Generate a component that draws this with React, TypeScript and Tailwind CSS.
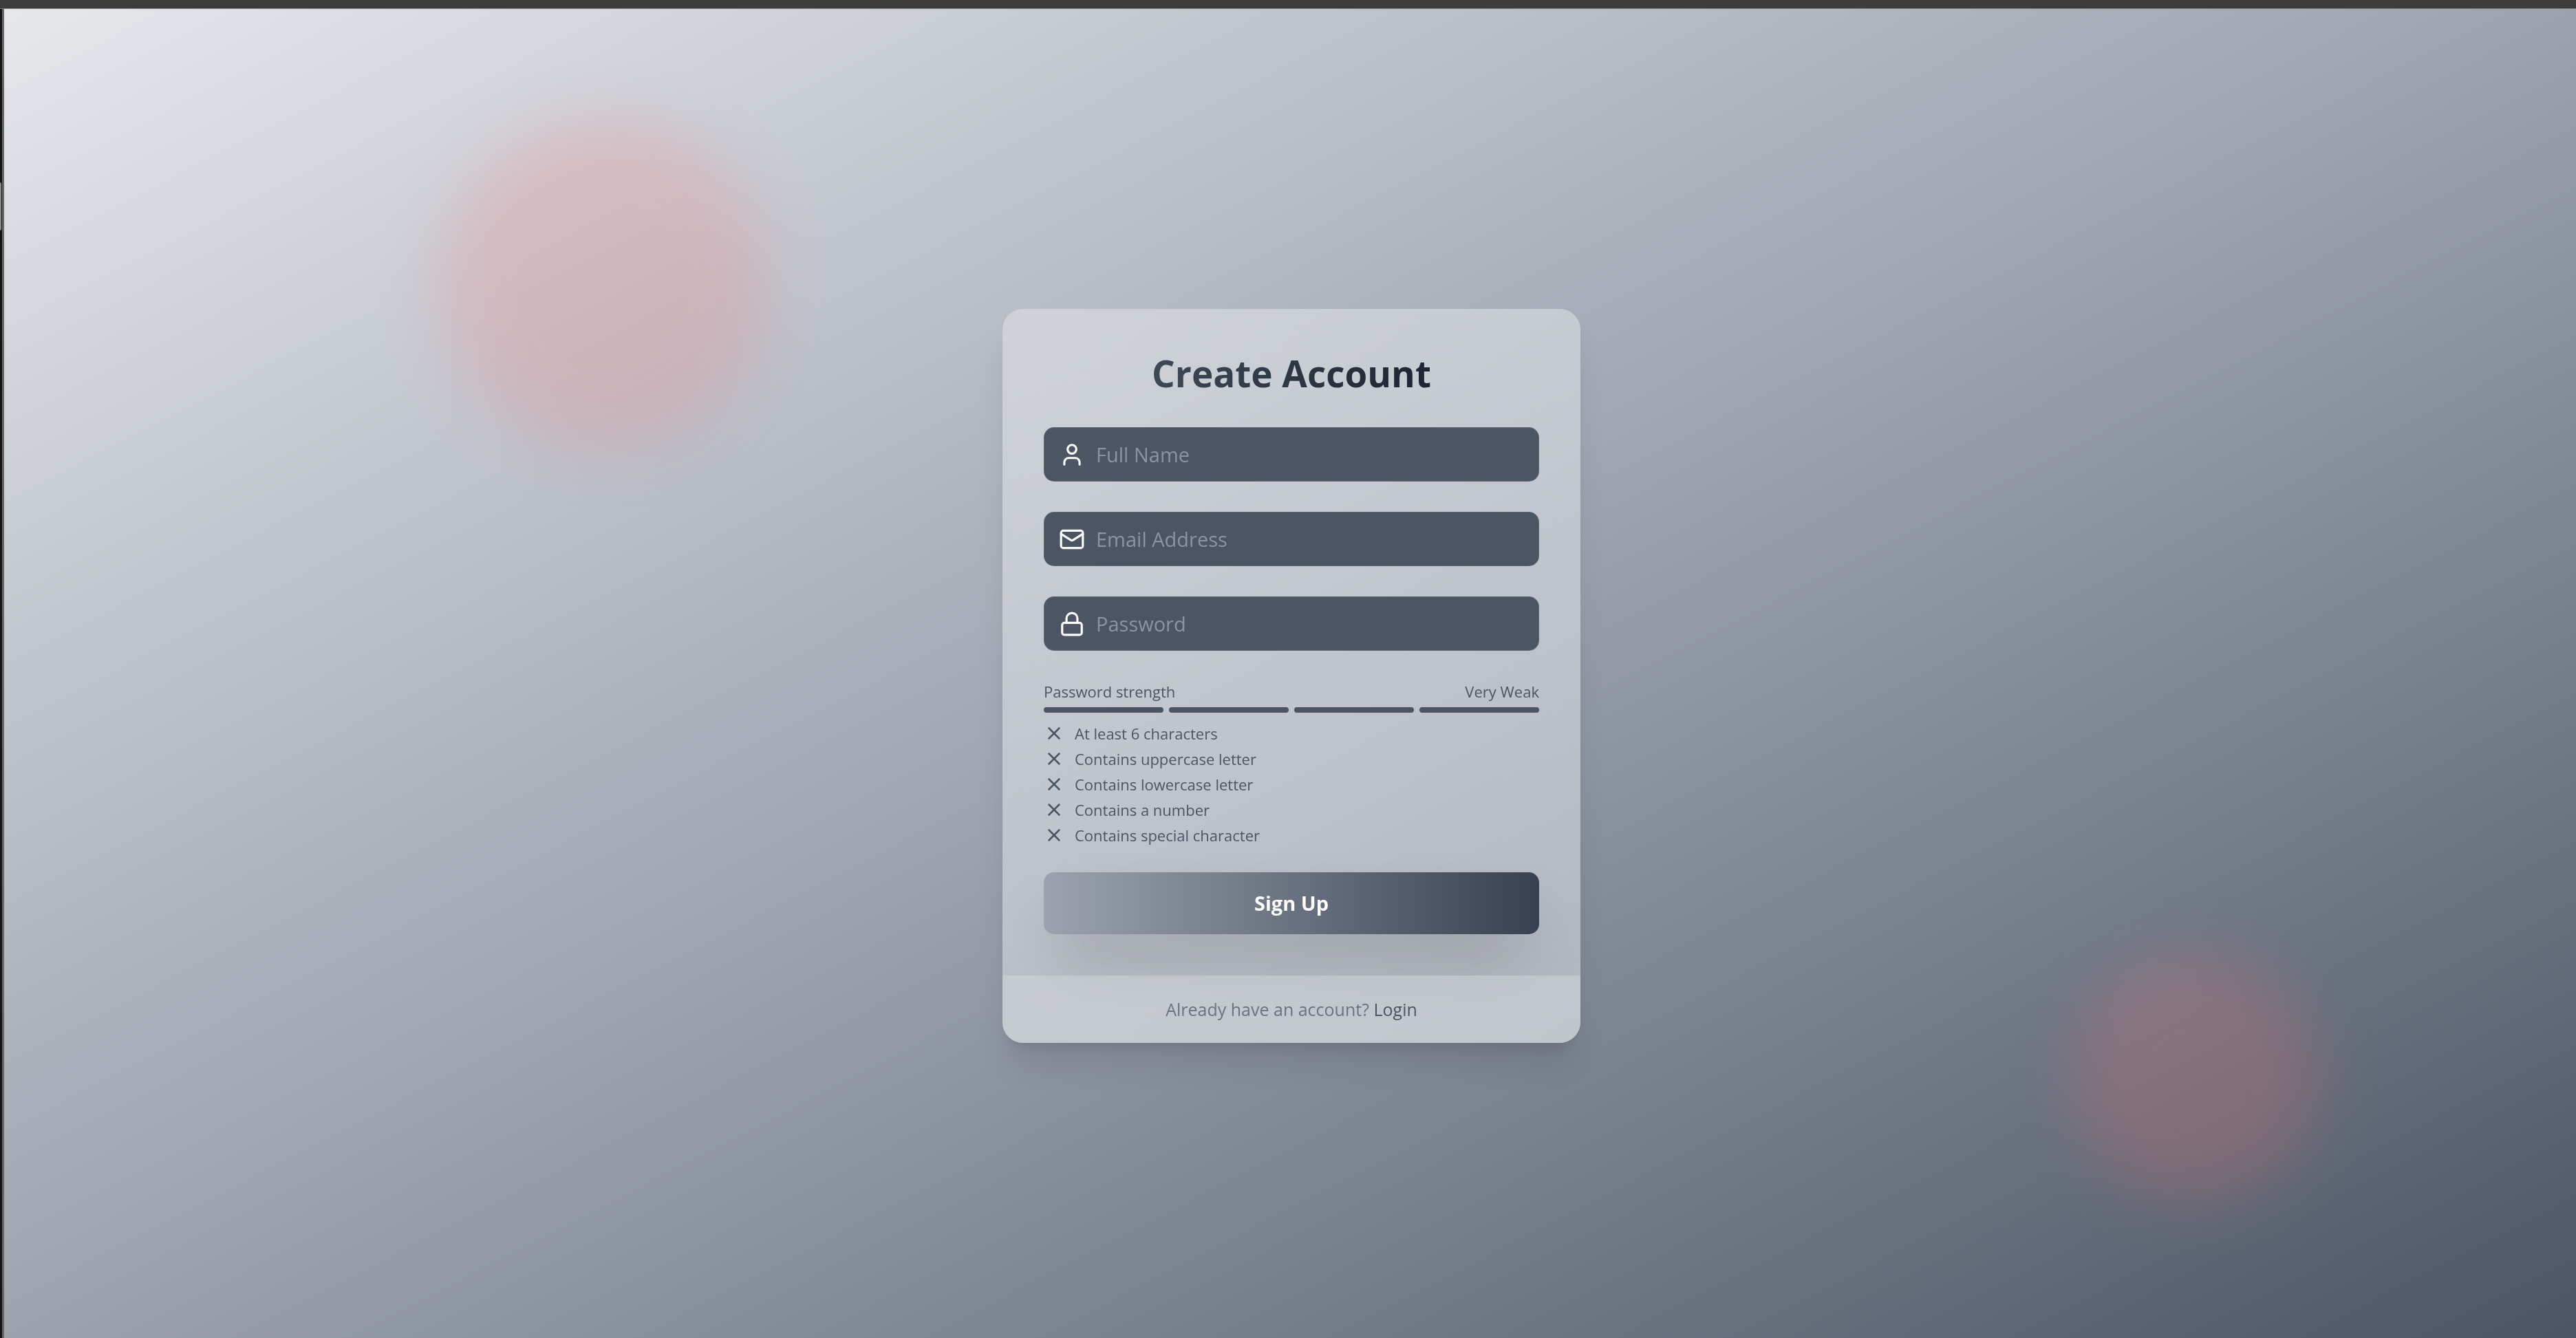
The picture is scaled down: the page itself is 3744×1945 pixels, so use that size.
import { useState } from "react";
import { Lock, Mail, User, X, type LucideIcon } from "lucide-react";

function FloatingShape({ className }: { className: string }) {
  return (
    <div
      aria-hidden="true"
      className={`absolute rounded-full bg-[#f87171] opacity-20 blur-[45px] ${className}`}
    />
  );
}

function Field({
  id,
  type,
  label,
  icon: Icon,
  value,
  onChange,
}: {
  id: string;
  type: string;
  label: string;
  icon: LucideIcon;
  value: string;
  onChange: (value: string) => void;
}) {
  return (
    <div className="relative mb-11">
      <label htmlFor={id} className="pointer-events-none absolute inset-y-0 left-[22px] flex items-center">
        <Icon aria-hidden="true" className="size-[38px] text-white" />
      </label>
      <input
        id={id}
        type={type}
        aria-label={label}
        placeholder={label}
        value={value}
        onChange={(e) => onChange(e.target.value)}
        className="block h-[79px] w-full rounded-[15px] border border-[#6b7280]/60 bg-[#4b5563] pr-6 pl-[75px] text-[29px] text-white placeholder-[#8b95a1] outline-none"
      />
    </div>
  );
}

const criteria = [
  "At least 6 characters",
  "Contains uppercase letter",
  "Contains lowercase letter",
  "Contains a number",
  "Contains special character",
];

function PasswordStrength() {
  return (
    <section aria-label="Password strength">
      <div className="mb-2 flex items-center justify-between text-[22px] leading-[30px] text-[#4b5563]">
        <span>Password strength</span>
        <span>Very Weak</span>
      </div>
      <div className="flex gap-2">
        {[0, 1, 2, 3].map((i) => (
          <div key={i} className="h-2 flex-1 rounded-full bg-[#4b5563]" />
        ))}
      </div>
      <ul className="mt-[15px] flex flex-col gap-[7px] text-[22px] leading-[30px] text-[#4b5563]">
        {criteria.map((text) => (
          <li key={text} className="flex items-center gap-[15px]">
            <X aria-hidden="true" className="size-[30px]" />
            <span>{text}</span>
          </li>
        ))}
      </ul>
    </section>
  );
}

export default function App() {
  const [name, setName] = useState("");
  const [email, setEmail] = useState("");
  const [password, setPassword] = useState("");

  return (
    <div className="flex min-h-screen flex-col bg-[#3c3c3c] font-['Open_Sans',sans-serif]">
      <div className="h-[13px] border-b border-[#7a7a7a]" />
      <div className="flex flex-1">
        <div className="w-[3px] bg-[#141414] pt-[252px]">
          <div className="h-[70px] w-[2px] rounded-r-sm bg-[#8a8a8a]" />
        </div>
        <div className="w-[3px] bg-[#666666]" />
        <main className="relative flex flex-1 items-center justify-center overflow-hidden bg-[linear-gradient(to_bottom_right,#e5e7eb,#9ca3af,#4b5563)] pt-[7px] pl-1">
          <FloatingShape className="top-[8.3%] left-[16.9%] size-[480px]" />
          <FloatingShape className="top-[71%] left-[80.3%] size-[360px]" />

          <div className="relative w-full max-w-[840px] overflow-hidden rounded-[30px] bg-[#e5e7eb]/50 shadow-[0_38px_47px_-9px_rgba(0,0,0,0.1),0_15px_19px_-11px_rgba(0,0,0,0.1)] backdrop-blur-[45px]">
            <form className="p-[60px]" onSubmit={(e) => e.preventDefault()}>
              <h1 className="mb-11 bg-[linear-gradient(to_right,#4b5563,#111827)] bg-clip-text text-center text-[53px] leading-[68px] font-bold text-transparent">
                Create Account
              </h1>
              <Field id="name" type="text" label="Full Name" icon={User} value={name} onChange={setName} />
              <Field id="email" type="email" label="Email Address" icon={Mail} value={email} onChange={setEmail} />
              <Field id="password" type="password" label="Password" icon={Lock} value={password} onChange={setPassword} />
              <PasswordStrength />
              <button
                type="submit"
                className="mt-[39px] block h-[90px] w-full rounded-[15px] bg-[linear-gradient(to_right,#9ca3af,#374151)] text-[29px] font-bold text-white shadow-[0_47px_94px_-22px_rgba(0,0,0,0.25)]"
              >
                Sign Up
              </button>
            </form>
            <div className="relative flex justify-center bg-[#d1d5db]/50 py-[30px]">
              <p className="text-[25px] leading-[38px] text-[#6b7280]">
                Already have an account?{" "}
                <a href="#login" className="text-[#4b5563]">
                  Login
                </a>
              </p>
            </div>
          </div>
        </main>
      </div>
    </div>
  );
}
